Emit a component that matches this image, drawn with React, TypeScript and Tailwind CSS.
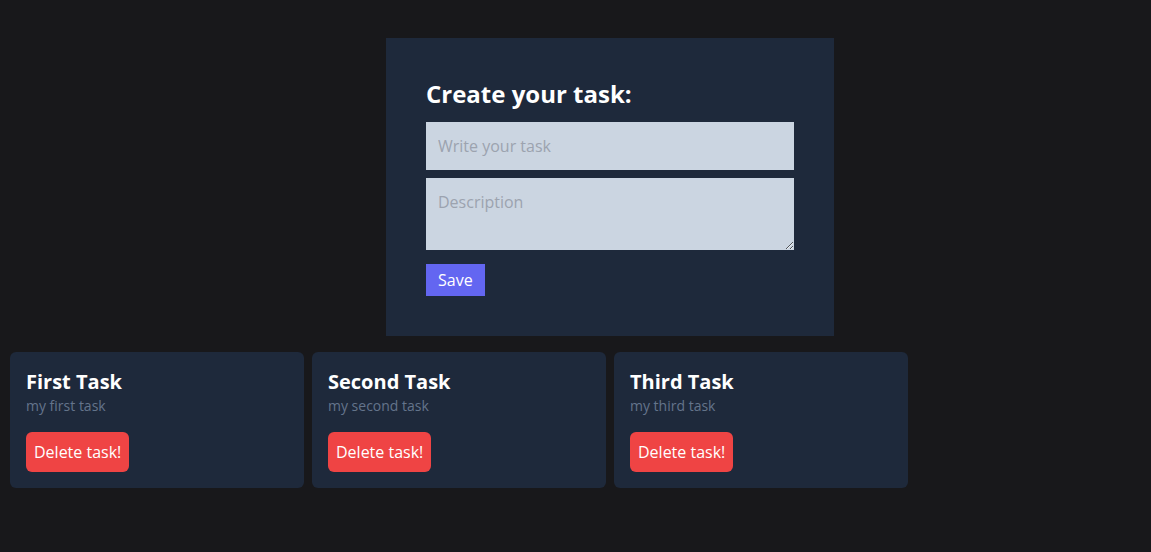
import { useState } from "react";

type Task = {
  id: number;
  title: string;
  description: string;
};

const initialTasks: Task[] = [
  { id: 1, title: "First Task", description: "my first task" },
  { id: 2, title: "Second Task", description: "my second task" },
  { id: 3, title: "Third Task", description: "my third task" },
];

export default function App() {
  const [tasks, setTasks] = useState<Task[]>(initialTasks);
  const [title, setTitle] = useState("");
  const [description, setDescription] = useState("");

  const handleSubmit = (e: React.FormEvent) => {
    e.preventDefault();
    if (!title) return;
    setTasks([...tasks, { id: Date.now(), title, description }]);
    setTitle("");
    setDescription("");
  };

  return (
    <main
      className="bg-[#18181b] min-h-screen w-screen overflow-hidden"
      style={{ fontFamily: '"Open Sans", sans-serif' }}
    >
      <div className="w-[1220px] pt-[38px]">
        {/* Task Form */}
        <div className="max-w-md mx-auto">
          <form onSubmit={handleSubmit} className="bg-[#1e293b] p-10 mb-4">
            <h1 className="text-2xl font-bold text-white mb-3">
              Create your task:
            </h1>
            <input
              placeholder="Write your task"
              value={title}
              onChange={(e) => setTitle(e.target.value)}
              className="bg-[#cbd5e1] p-3 w-full mb-2 block outline-none placeholder:text-[#9ca3af]"
            />
            <textarea
              placeholder="Description"
              value={description}
              onChange={(e) => setDescription(e.target.value)}
              rows={2}
              className="bg-[#cbd5e1] p-3 w-full mb-[14px] block outline-none placeholder:text-[#9ca3af]"
            />
            <button className="bg-[#6366f1] px-3 py-1 text-white">Save</button>
          </form>
        </div>

        {/* Task List */}
        <div className="grid grid-cols-4 gap-2 px-[10px]">
          {tasks.map((task) => (
            <div key={task.id} className="bg-[#1e293b] text-white p-4 rounded-md">
              <h2 className="text-xl font-bold">{task.title}</h2>
              <p className="text-[#64748b] text-sm">{task.description}</p>
              <button
                onClick={() => setTasks(tasks.filter((t) => t.id !== task.id))}
                className="bg-[#ef4444] px-2 py-2 rounded-md mt-4"
              >
                Delete task!
              </button>
            </div>
          ))}
        </div>
      </div>
    </main>
  );
}
